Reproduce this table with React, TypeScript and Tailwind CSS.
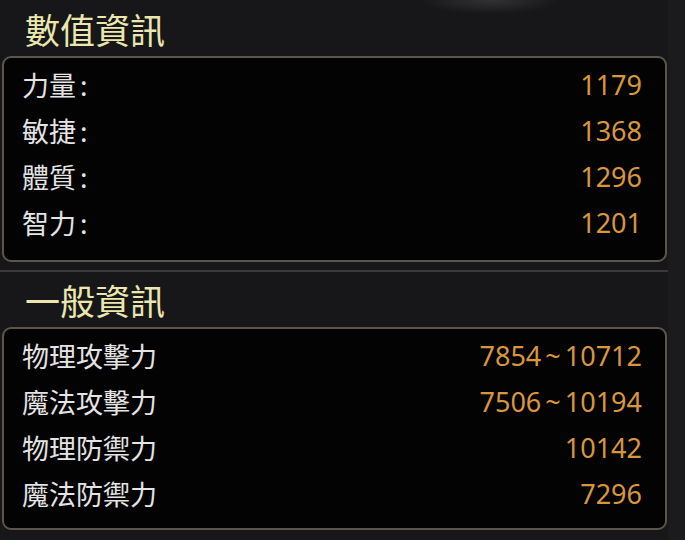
import React from "react";

const cjk = { fontFamily: '"Noto Sans CJK TC", "Noto Sans", sans-serif' };
const num = { fontFamily: '"Noto Sans", "Noto Sans CJK TC", sans-serif' };

type Row = { label: string; value: string };

const stats: Row[] = [
  { label: "力量:", value: "1179" },
  { label: "敏捷:", value: "1368" },
  { label: "體質:", value: "1296" },
  { label: "智力:", value: "1201" },
];

const general: Row[] = [
  { label: "物理攻擊力", value: "7854~10712" },
  { label: "魔法攻擊力", value: "7506~10194" },
  { label: "物理防禦力", value: "10142" },
  { label: "魔法防禦力", value: "7296" },
];

function Title({ text, h }: { text: string; h: string }) {
  return (
    <div className={`flex items-center pl-[25px] ${h}`}>
      <span className="text-[35px] leading-none text-[#ebe7ae]" style={cjk}>
        {text}
      </span>
    </div>
  );
}

function Label({ text }: { text: string }) {
  if (text.endsWith(":")) {
    return (
      <span className="text-[27px] leading-none text-[#e4e4e4]" style={cjk}>
        {text.slice(0, -1)}
        <span className="ml-[4px]">:</span>
      </span>
    );
  }
  return (
    <span className="text-[27px] leading-none text-[#e4e4e4]" style={cjk}>
      {text}
    </span>
  );
}

function Value({ text }: { text: string }) {
  const parts = text.split("~");
  return (
    <span className="text-[27px] leading-none text-[#d8963d]" style={num}>
      {parts.length === 2 ? (
        <>
          {parts[0]}
          <span className="px-[4px]">~</span>
          {parts[1]}
        </>
      ) : (
        text
      )}
    </span>
  );
}

function Panel({ rows, cls }: { rows: Row[]; cls: string }) {
  return (
    <div
      className={`ml-[2px] w-[665px] rounded-[9px] border-2 border-[#5b5649] bg-[#030303] pl-[18px] pr-[23px] ${cls}`}
    >
      {rows.map((r) => (
        <div key={r.label} className="flex h-[46px] items-center justify-between">
          <Label text={r.label} />
          <Value text={r.value} />
        </div>
      ))}
    </div>
  );
}

export default function App() {
  return (
    <div className="flex h-[540px] w-[685px] overflow-hidden bg-[#17171a]">
      <div className="flex w-[668px] flex-col bg-[radial-gradient(ellipse_70px_14px_at_490px_0px,rgba(255,250,225,0.12),transparent)]">
        <Title text="數值資訊" h="h-[56px]" />
        <Panel rows={stats} cls="h-[206px] pt-[3px]" />
        <div className="mt-[8px] h-[2px] w-full bg-[#3a3a3d]" />
        <Title text="一般資訊" h="h-[55px]" />
        <Panel rows={general} cls="h-[203px] pt-[3px]" />
      </div>
      <div className="flex-1 bg-[#1b1b1e]" />
    </div>
  );
}
